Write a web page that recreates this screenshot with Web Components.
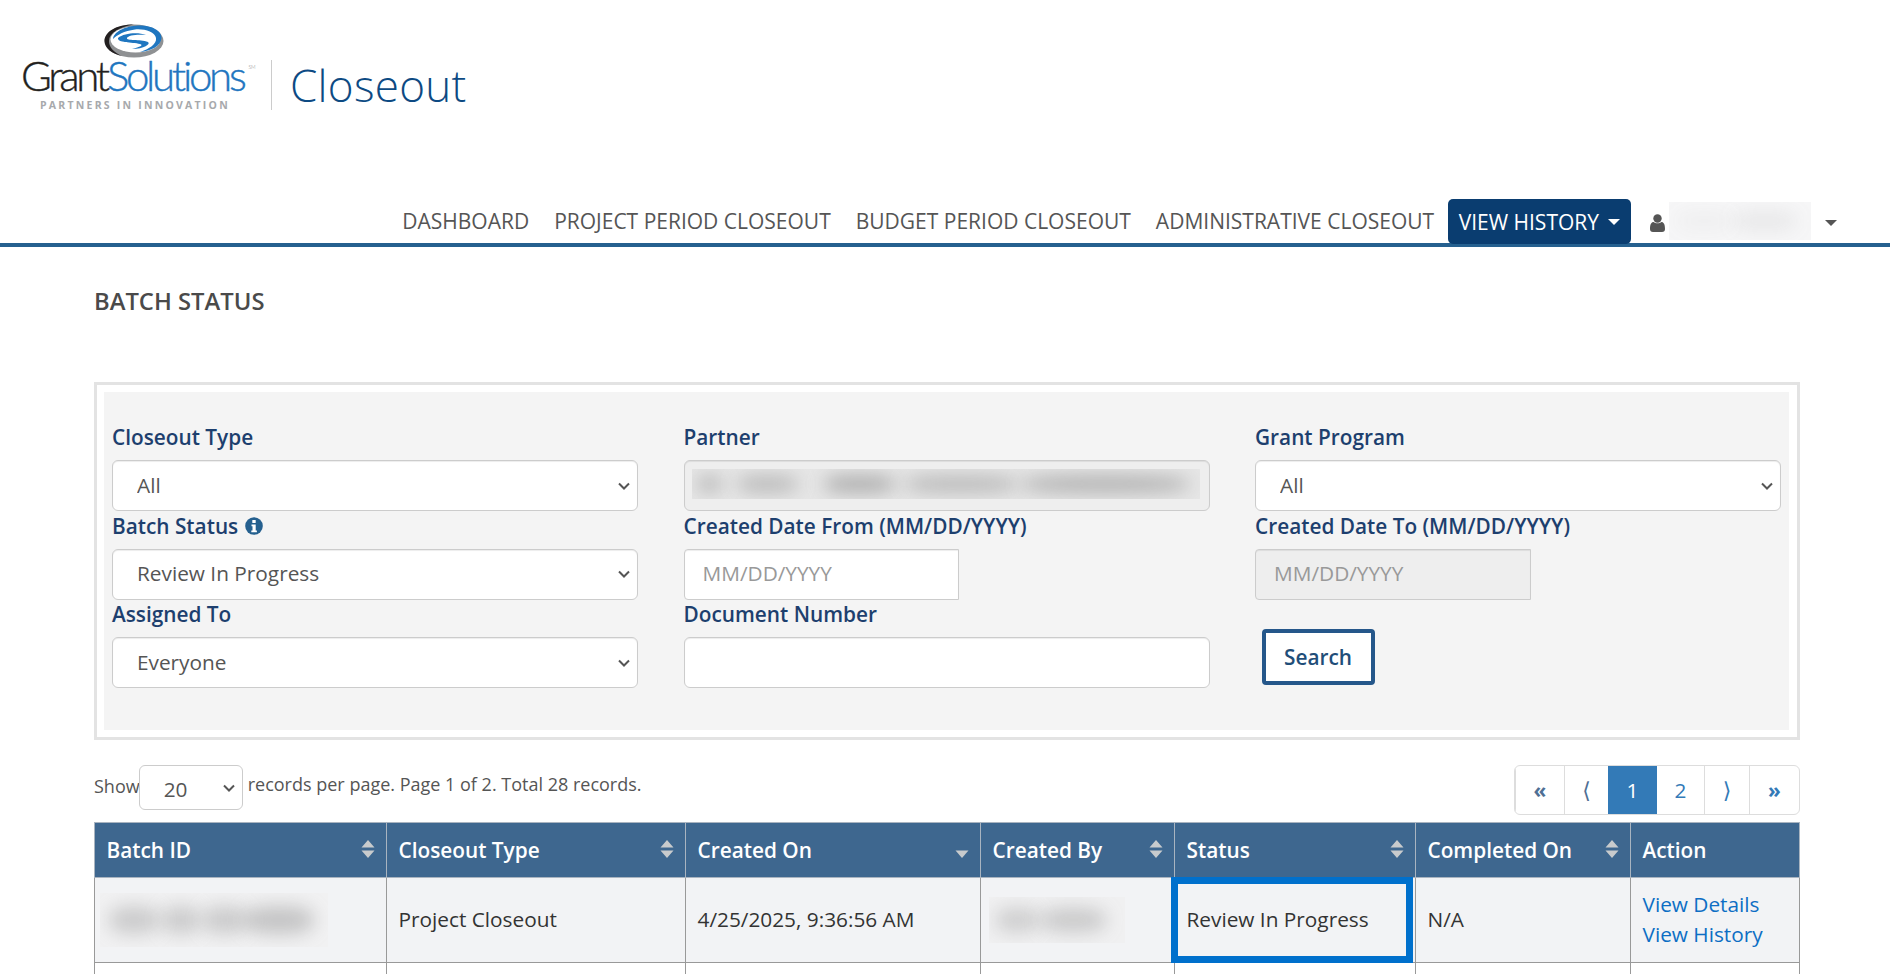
<!DOCTYPE html>
<html lang="en">
<head>
<meta charset="utf-8">
<title>Batch Status</title>
<style>
    html, body { margin: 0; background: #fff; }
    body { font-family: "Open Sans", sans-serif; }
</style>
</head>
<body>
<gs-header></gs-header>
<gs-nav></gs-nav>
<gs-page>
    <gs-filters></gs-filters>
    <gs-toolbar></gs-toolbar>
    <gs-table></gs-table>
</gs-page>

<script>
// Blurred-out redactions from the screenshot. blobs = list of [left%, width%, darkness]
function blurBox(blobs, bg, height) {
    const parts = blobs.map(b => `<i style="left:${b[0]}%;width:${b[1]}%;background:rgba(120,120,120,${b[2]})"></i>`).join('');
    return `<div class="blur" style="background:${bg};height:${height}px">${parts}</div>`;
}
const BLUR_CSS = `
    .blur { position: relative; overflow: hidden; }
    .blur i { position: absolute; top: 24%; bottom: 24%; border-radius: 40%; filter: blur(9px); }
`;
const CHEVRON = `url("data:image/svg+xml,%3Csvg xmlns='http://www.w3.org/2000/svg' width='12' height='8' viewBox='0 0 12 8'%3E%3Cpath d='M1 1.500l5 5 5-5' fill='none' stroke='%23555' stroke-width='2'/%3E%3C/svg%3E")`;

class GsHeader extends HTMLElement {
    connectedCallback() {
        this.attachShadow({ mode: 'open' }).innerHTML = `
            <style>
                :host { display: block; height: 199px; box-sizing: border-box; padding: 24px 0 0 23px; }
                .row { display: flex; align-items: flex-start; }
                .logo { width: 226px; flex: none; display: flex; flex-direction: column; align-items: flex-start; }
                svg { display: block; margin-left: 81px; }
                .word { font-family: Lato, sans-serif; font-size: 42px; line-height: 42px; letter-spacing: -3.300px; font-weight: 300; white-space: nowrap; margin: -4px 0 0 -2px; }
                .word b { font-weight: 300; color: #231f20; -webkit-text-stroke: .4px #231f20; }
                .word span { color: #1f76c0; -webkit-text-stroke: .4px #1f76c0; }
                .word sup { font-size: 5px; letter-spacing: 0; color: #888; vertical-align: 22px; line-height: 0; margin-left: 5px; -webkit-text-stroke: 0; }
                .tag { font-family: "Open Sans", sans-serif; font-size: 10.500px; line-height: 12px; font-weight: 700; letter-spacing: 2.230px; color: #a7a9ac; margin: 3px 0 0 17px; white-space: nowrap; }
                .sep { width: 1px; height: 50px; background: #ccc; margin: 36px 0 0 22px; flex: none; }
                .name { font-family: "Open Sans", sans-serif; font-weight: 300; font-size: 44px; line-height: 50px; letter-spacing: .3px; color: #0d4a83; margin: 36px 0 0 18px; }
            </style>
            <div class="row">
                <div class="logo">
                    <svg width="60" height="34" viewBox="0 0 60 34">
                        <ellipse cx="30" cy="17" rx="29.500" ry="16.500" fill="#8f9193"/>
                        <path d="M30 .5C12 .5.5 8 .5 17 .5 24 8 30 18 32 9 28 5 23 5 17 5 9 15 3 30 .5Z" fill="#231f20"/>
                        <ellipse cx="31.500" cy="15.500" rx="25" ry="13" fill="#fff"/>
                        <path d="M9 15C10 6 25 1.500 36 1.500 48 1.500 58 7 57.500 14 57 22 47 27 36 28 45 25 53 20 52 14 51 8 40 4.500 31 5.500 20 7 13 11 9 15Z" fill="#1f76c0"/>
                        <path d="M14 14C20 9 34 8 42 11 34 10 24 11 23 14 22 17 36 15 44 18 47 20 40 25 28 25 36 23 40 21 36 20 28 18 13 19 14 14Z" fill="#1f76c0"/>
                    </svg>
                    <div class="word"><b>Grant</b><span>Solutions</span><sup>SM</sup></div>
                    <div class="tag">PARTNERS IN INNOVATION</div>
                </div>
                <div class="sep"></div>
                <div class="name">Closeout</div>
            </div>`;
    }
}

class GsNav extends HTMLElement {
    connectedCallback() {
        const links = ['DASHBOARD', 'PROJECT PERIOD CLOSEOUT', 'BUDGET PERIOD CLOSEOUT', 'ADMINISTRATIVE CLOSEOUT'];
        this.attachShadow({ mode: 'open' }).innerHTML = `
            <style>
                ${BLUR_CSS}
                :host { display: flex; justify-content: flex-end; align-items: stretch; height: 48px; box-sizing: border-box; border-bottom: 4px solid #25608f; padding-right: 53px; font-size: 21px; color: #555; }
                a { display: flex; align-items: center; padding: 0 12.500px; height: 44px; color: #555; white-space: nowrap; }
                a.active { background: #0a3d70; color: #fff; border-radius: 5px; padding: 0 11px; margin-left: 1px; margin-bottom: -1px; height: 45px; }
                .caret { display: inline-block; margin-left: 9px; border-top: 6px solid currentColor; border-left: 6px solid transparent; border-right: 6px solid transparent; }
                .user { display: flex; align-items: center; margin-left: 19px; color: #555; height: 44px; }
                .user svg { display: block; margin-top: 4px; }
                .user .blur { width: 142px; margin-left: 4px; }
                .user .caret { margin-left: 14px; margin-top: 4px; }
            </style>
            ${links.map(l => `<a>${l}</a>`).join('')}
            <a class="active">VIEW HISTORY<span class="caret"></span></a>
            <div class="user">
                <svg width="15" height="18" viewBox="0 0 15 18"><circle cx="7.500" cy="4.500" r="4.200" fill="#555"/><path d="M0 15c0-5 1.500-7 3.500-7 1 .8 2.500 1.300 4 1.300S10.500 8.800 11.500 8c2 0 3.500 2 3.500 7 0 2-1 3-3 3H3c-2 0-3-1-3-3Z" fill="#555"/></svg>
                ${blurBox([[5, 40, .05], [45, 45, .1]], '#f6f6f7', 38)}
                <span class="caret"></span>
            </div>`;
    }
}

class GsPage extends HTMLElement {
    connectedCallback() {
        // clipped at the window bottom, the table carries on past it in the screenshot
        this.attachShadow({ mode: 'open' }).innerHTML = `
            <style>
                :host { display: block; height: 727px; overflow: hidden; padding: 0 90px 0 94px; }
                h1 { margin: 0; height: 135px; box-sizing: border-box; padding-top: 39px; font-size: 23.800px; line-height: 30px; font-weight: 600; color: #4a4a4a; }
            </style>
            <h1>BATCH STATUS</h1>
            <slot></slot>`;
    }
}

class GsField extends HTMLElement {
    connectedCallback() {
        this.attachShadow({ mode: 'open' }).innerHTML = `
            <style>
                :host { display: block; height: 88.500px; }
                label { display: flex; align-items: center; gap: 7px; height: 30px; margin-top: -1px; font-size: 20.800px; font-weight: 600; color: #1d3f6e; white-space: nowrap; }
                .ctl { margin-top: 8px; }
                ::slotted(*) { display: block; }
            </style>
            <label>${this.getAttribute('label')}<slot name="hint"></slot></label>
            <div class="ctl"><slot></slot></div>`;
    }
}

class GsSelect extends HTMLElement {
    connectedCallback() {
        this.attachShadow({ mode: 'open' }).innerHTML = `
            <style>
                :host { display: block; }
                select { display: block; width: 100%; height: 51px; box-sizing: border-box; appearance: none; border: 1px solid #ccc; border-radius: 6px; background: #fff ${CHEVRON} no-repeat right 7px center; padding: 0 26px 2px 24px; font: 20.800px "Open Sans", sans-serif; color: #555; box-shadow: inset 0 1px 1px rgba(0,0,0,.075); }
            </style>
            <select><option>${this.getAttribute('value')}</option></select>`;
    }
}

class GsInput extends HTMLElement {
    connectedCallback() {
        const disabled = this.hasAttribute('disabled');
        this.attachShadow({ mode: 'open' }).innerHTML = `
            <style>
                :host { display: block; width: ${this.getAttribute('width') || '100%'}; }
                input { display: block; width: 100%; height: 51px; box-sizing: border-box; border: 1px solid #ccc; border-radius: 4px 0 0 4px; padding: 0 18px 2px; font: 20.800px "Open Sans", sans-serif; color: #555; background: ${disabled ? '#eee' : '#fff'}; box-shadow: inset 0 1px 1px rgba(0,0,0,.075); outline: none; }
                input::placeholder { color: #999; opacity: 1; }
                input.full { border-radius: 6px; }
            </style>
            <input class="${this.hasAttribute('full') ? 'full' : ''}" placeholder="${this.getAttribute('placeholder') || ''}" ${disabled ? 'disabled' : ''}>`;
    }
}

class GsFilters extends HTMLElement {
    connectedCallback() {
        this.attachShadow({ mode: 'open' }).innerHTML = `
            <style>
                ${BLUR_CSS}
                :host { display: block; height: 358px; box-sizing: border-box; border: 3px solid #e3e3e3; padding: 7px 8px 7px 7px; }
                .well { height: 100%; box-sizing: border-box; background: #f4f4f4; padding: 31px 8px 0; display: grid; grid-template-columns: repeat(3, 1fr); column-gap: 45.500px; align-content: start; }
                .locked { height: 51px; box-sizing: border-box; border: 1px solid #ccc; border-radius: 6px; background: #eee; padding: 8px 9px 0 7px; box-shadow: inset 0 1px 1px rgba(0,0,0,.075); }
                button { display: block; margin: 0; width: 113px; height: 56px; box-sizing: border-box; border: 4px solid #25578a; border-radius: 4px; background: #fff; color: #1f4e79; font: 600 20.800px "Open Sans", sans-serif; }
                .act { padding: 29px 0 0 6.500px; }
            </style>
            <div class="well">
                <gs-field label="Closeout Type"><gs-select value="All"></gs-select></gs-field>
                <gs-field label="Partner"><div class="locked">
                    ${blurBox([[1, 5, .42], [9, 12, .42], [26, 14, .55], [42, 22, .42], [65, 33, .5]], '#e6e6e6', 30)}
                </div></gs-field>
                <gs-field label="Grant Program"><gs-select value="All"></gs-select></gs-field>
                <gs-field label="Batch Status">
                    <svg slot="hint" width="18" height="18" viewBox="0 0 18 18"><circle cx="9" cy="9" r="8.800" fill="#25608f"/><rect x="7.300" y="3" width="3.400" height="3" rx=".6" fill="#fff"/><path d="M6.500 7.400h4.200v6h1.200v1.800H6.300v-1.800h1.200V9.200h-1Z" fill="#fff"/></svg>
                    <gs-select value="Review In Progress"></gs-select>
                </gs-field>
                <gs-field label="Created Date From (MM/DD/YYYY)"><gs-input width="275px" placeholder="MM/DD/YYYY"></gs-input></gs-field>
                <gs-field label="Created Date To (MM/DD/YYYY)"><gs-input width="276px" placeholder="MM/DD/YYYY" disabled></gs-input></gs-field>
                <gs-field label="Assigned To"><gs-select value="Everyone"></gs-select></gs-field>
                <gs-field label="Document Number"><gs-input full></gs-input></gs-field>
                <div class="act"><button>Search</button></div>
            </div>`;
    }
}

class GsToolbar extends HTMLElement {
    connectedCallback() {
        this.attachShadow({ mode: 'open' }).innerHTML = `
            <style>
                :host { display: flex; justify-content: space-between; align-items: flex-start; height: 82px; padding-top: 25px; box-sizing: border-box; font-size: 18px; color: #555; }
                .left { display: flex; align-items: flex-start; white-space: nowrap; }
                .left span { line-height: 42px; }
                select { width: 104px; height: 45px; box-sizing: border-box; appearance: none; border: 1px solid #ccc; border-radius: 6px; background: #fff ${CHEVRON} no-repeat right 7px center; padding: 3px 20px 0 24px; margin: 0 5px 0 -1px; font: 20.800px "Open Sans", sans-serif; color: #555; }
                .rec { margin-top: -2px; }
            </style>
            <div class="left"><span>Show</span><select><option>20</option></select><span class="rec">records per page. Page 1 of 2. Total 28 records.</span></div>
            <gs-pager></gs-pager>`;
    }
}

class GsPager extends HTMLElement {
    connectedCallback() {
        const items = [['«', 49, 'dim b'], ['⟨', 44, 'dim ang'], ['1', 49, 'on'], ['2', 47, ''], ['⟩', 45, 'ang'], ['»', 50, 'b']];
        this.attachShadow({ mode: 'open' }).innerHTML = `
            <style>
                :host { display: flex; width: 286px; height: 50px; box-sizing: border-box; border: 1px solid #ddd; border-radius: 6px; overflow: hidden; font-size: 20.800px; color: #337ab7; }
                span { display: flex; align-items: center; justify-content: center; box-sizing: border-box; border-left: 1px solid #ddd; }
                span:first-child { border-left: 0; }
                .b { font-weight: 700; }
                .dim { color: #4f6f94; }
                .on { background: #337ab7; color: #fff; border-left: 0; margin: -1px 0; }
                .on + span { border-left: 0; }
                .ang { font-family: "DejaVu Sans", sans-serif; font-size: 22px; }
            </style>
            ${items.map(i => `<span class="${i[2]}" style="width:${i[1]}px">${i[0]}</span>`).join('')}`;
    }
}

class GsTable extends HTMLElement {
    connectedCallback() {
        const sortBoth = `<svg class="sort" width="14" height="18" viewBox="0 0 14 18"><path d="M7 0l6.500 7.500H.5ZM.5 10.500h13L7 18Z" fill="#c8cbcd"/></svg>`;
        const sortDown = `<svg class="sort" width="14" height="18" viewBox="0 0 14 18"><path d="M.5 10.500h13L7 18Z" fill="#c8cbcd"/></svg>`;
        const cols = [
            ['Batch ID', 292, sortBoth], ['Closeout Type', 299, sortBoth], ['Created On', 295, sortDown],
            ['Created By', 194, sortBoth], ['Status', 241, sortBoth], ['Completed On', 215, sortBoth], ['Action', 169, '']
        ];
        this.attachShadow({ mode: 'open' }).innerHTML = `
            <style>
                ${BLUR_CSS}
                :host { display: block; font-size: 20.800px; color: #333; }
                table { border-collapse: collapse; table-layout: fixed; width: 1705px; }
                th, td { border: 1px solid #999; padding: 0 11.500px; text-align: left; white-space: nowrap; }
                th { position: relative; height: 53px; background: #3e678f; color: #fff; font-weight: 600; border-color: #a9b4c0; padding-bottom: 1px; }
                td { height: 82px; background: #f2f3f5; padding-bottom: 2px; }
                tr.next td { background: #fff; }
                .sort { position: absolute; right: 11px; top: 17px; display: block; }
                a { display: block; color: #0d6ec4; line-height: 30px; }
                td.flag { position: relative; }
                td.flag::after { content: ""; position: absolute; left: -4px; right: 2px; top: -1px; bottom: -1px; border: 7px solid #0070cc; pointer-events: none; }
                td.pad { padding: 0 5px; height: 84px; }
            </style>
            <table>
                <colgroup>${cols.map(c => `<col style="width:${c[1]}px">`).join('')}</colgroup>
                <thead><tr>${cols.map(c => `<th>${c[0]}${c[2]}</th>`).join('')}</tr></thead>
                <tbody>
                    <tr>
                        <td class="pad"><div style="width:228px">${blurBox([[4, 22, .3], [27, 17, .3], [45, 19, .3], [63, 31, .36]], '#f1f1f2', 54)}</div></td>
                        <td>Project Closeout</td>
                        <td>4/25/2025, 9:36:56 AM</td>
                        <td class="pad"><div style="width:136px;margin-left:3px">${blurBox([[5, 32, .28], [38, 48, .32]], '#f0f0f1', 46)}</div></td>
                        <td class="flag">Review In Progress</td>
                        <td>N/A</td>
                        <td><a>View Details</a><a>View History</a></td>
                    </tr>
                    <tr class="next"><td></td><td></td><td></td><td></td><td></td><td></td><td></td></tr>
                </tbody>
            </table>`;
    }
}

customElements.define('gs-header', GsHeader);
customElements.define('gs-nav', GsNav);
customElements.define('gs-page', GsPage);
customElements.define('gs-field', GsField);
customElements.define('gs-select', GsSelect);
customElements.define('gs-input', GsInput);
customElements.define('gs-filters', GsFilters);
customElements.define('gs-toolbar', GsToolbar);
customElements.define('gs-pager', GsPager);
customElements.define('gs-table', GsTable);
</script>
</body>
</html>
